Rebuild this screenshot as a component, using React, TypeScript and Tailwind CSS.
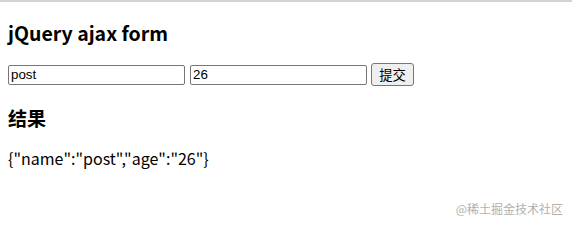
export default function App() {
  return (
    <div className="relative w-[572px] h-[224px] bg-white border-t-2 border-[#d4d4d4] overflow-hidden">
      <div className="px-2 font-['Microsoft_YaHei','Noto_Sans_CJK_SC',sans-serif] text-black">
        <h3 className="mt-[18px] text-[19.5px] font-bold leading-[26px]">jQuery ajax form</h3>
        <form className="mt-[17px] flex items-center h-[23px]" onSubmit={e => e.preventDefault()}>
          <input
            type="text"
            defaultValue="post"
            className="w-[177px] h-[20px] border border-[#767676] rounded-[2px] px-[2px] text-[13.33px] font-['Liberation_Sans',Arial,sans-serif] outline-none"
          />
          <input
            type="text"
            defaultValue="26"
            className="ml-[5px] w-[177px] h-[20px] border border-[#767676] rounded-[2px] px-[2px] text-[13.33px] font-['Liberation_Sans',Arial,sans-serif] outline-none"
          />
          <button
            type="submit"
            className="ml-[4px] w-[43px] h-[23px] border border-[#767676] rounded-[3px] bg-[#efefef] text-[13.33px] leading-none font-['Noto_Sans_CJK_SC',sans-serif]"
          >
            提交
          </button>
        </form>
        <h3 className="mt-[19px] text-[19px] font-bold leading-[26px]">结果</h3>
        <p className="mt-[16px] text-[16px] leading-[22px]">{'{"name":"post","age":"26"}'}</p>
      </div>
      <div className="absolute right-[9px] bottom-[7px] text-[12px] leading-[16px] text-[#b0b0b0] font-['Noto_Sans_CJK_SC',sans-serif]">
        @稀土掘金技术社区
      </div>
    </div>
  );
}
